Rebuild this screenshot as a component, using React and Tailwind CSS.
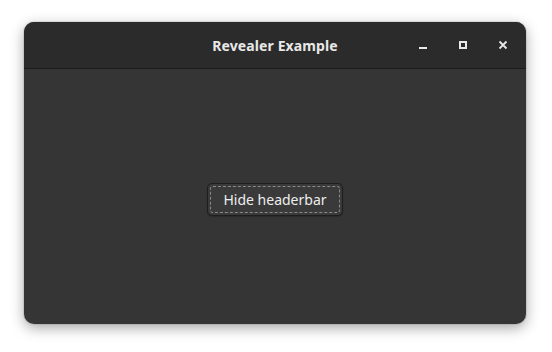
import React from 'react';

export default function App() {
    return (
        <div className="w-[552px] h-[352px] bg-white flex pt-[22px] pl-[24px]" style={{ fontFamily: '"Noto Sans", "DejaVu Sans", sans-serif' }}>
            <div className="w-[502px] h-[302px] rounded-[10px] overflow-hidden flex flex-col bg-[#353535] shadow-[0_4px_14px_rgba(0,0,0,0.35),0_0_0_1px_rgba(0,0,0,0.08)]">
                {/* Headerbar */}
                <div className="h-[47px] shrink-0 bg-[#2b2b2b] border-b border-[#1b1b1b] relative flex items-center justify-center">
                    <span className="text-[14px] font-bold text-[#e8e8e8] tracking-[0.1px]">Revealer Example</span>
                    <div className="absolute right-[10px] top-0 h-full flex items-center gap-[14px]">
                        <button className="w-[26px] h-[26px] flex items-center justify-center">
                            <svg width="10" height="10" viewBox="0 0 10 10">
                                <rect x="1" y="7" width="8" height="2" fill="#e8e8e8" />
                            </svg>
                        </button>
                        <button className="w-[26px] h-[26px] flex items-center justify-center">
                            <svg width="10" height="10" viewBox="0 0 10 10">
                                <rect x="2" y="2" width="6" height="6" fill="none" stroke="#e8e8e8" strokeWidth="2" />
                            </svg>
                        </button>
                        <button className="w-[26px] h-[26px] flex items-center justify-center">
                            <svg width="10" height="10" viewBox="0 0 10 10">
                                <path d="M1.5 1.5 L8.5 8.5 M8.5 1.5 L1.5 8.5" stroke="#e8e8e8" strokeWidth="1.8" />
                            </svg>
                        </button>
                    </div>
                </div>

                {/* Content */}
                <div className="flex-1 flex items-center justify-center pt-[5px]">
                    <button className="w-[136px] h-[33px] rounded-[5px] bg-[#3a3a3a] border border-[#1e1e1e] p-[2px] shadow-[0_1px_1px_rgba(0,0,0,0.2)]">
                        <div className="w-full h-full rounded-[3px] border border-dashed border-[#8a8a8a] flex items-center justify-center text-[14px] text-[#eeeeee]">
                            Hide headerbar
                        </div>
                    </button>
                </div>
            </div>
        </div>
    );
}
